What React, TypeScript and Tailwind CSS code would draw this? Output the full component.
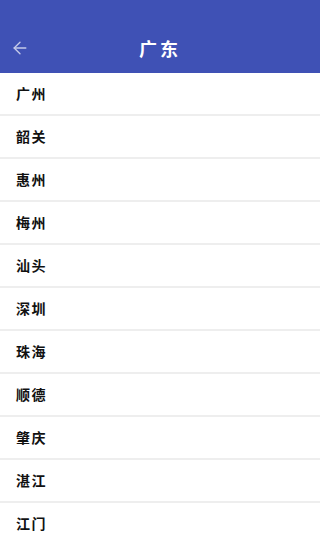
import { ArrowLeft } from 'lucide-react';

const CITIES = ['广州', '韶关', '惠州', '梅州', '汕头', '深圳', '珠海', '顺德', '肇庆', '湛江', '江门'];

export default function App() {
  return (
    <div
      className="w-[320px] h-[542px] overflow-hidden bg-white"
      style={{ fontFamily: '"Noto Sans CJK SC", "Noto Sans", sans-serif' }}
    >
      <header className="h-[73px] bg-[#3f51b5] flex items-end pb-[12px] relative">
        <ArrowLeft className="ml-[10px] w-[20px] h-[20px] text-[#c5cae9] mb-[3px]" strokeWidth={1.6} />
        <div className="absolute left-0 right-0 bottom-[12px] text-center text-white text-[18px] font-bold tracking-[3px] leading-[26px]">
          广东
        </div>
      </header>
      <ul>
        {CITIES.map((c) => (
          <li
            key={c}
            className="h-[43px] flex items-center px-[16px] border-b-2 border-[#eeeeee] text-[14px] font-semibold text-[#111] tracking-[1.5px]"
          >
            {c}
          </li>
        ))}
      </ul>
    </div>
  );
}
